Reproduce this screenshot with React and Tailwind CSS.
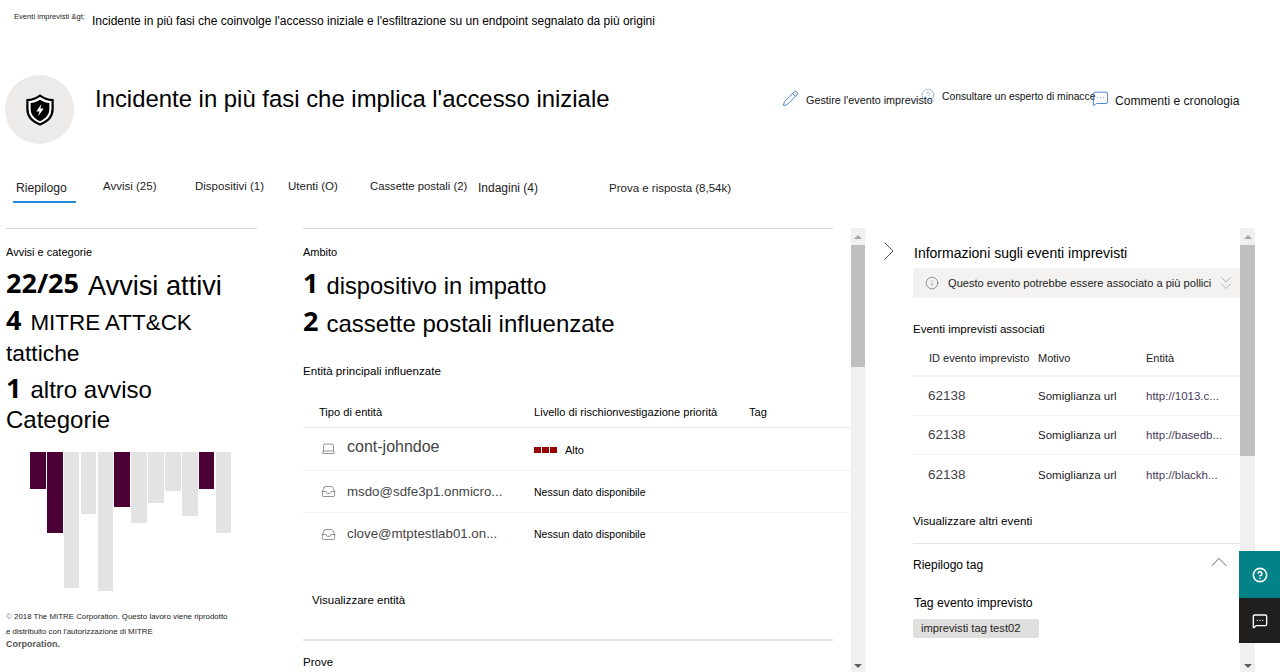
import React from 'react';
import { ChevronRight, ChevronUp, ChevronsDown, CircleHelp, Inbox, Info, Laptop, MessageSquareMore, Pencil } from 'lucide-react';

const BARS = [
    'h-[37px] bg-[#4b0036]', 'h-[81px] bg-[#4b0036]', 'h-[136px] bg-[#e3e3e3]', 'h-[62px] bg-[#e3e3e3]',
    'h-[139px] bg-[#e3e3e3]', 'h-[55px] bg-[#4b0036]', 'h-[71px] bg-[#e3e3e3]', 'h-[51px] bg-[#e3e3e3]',
    'h-[39px] bg-[#e3e3e3]', 'h-[64px] bg-[#e3e3e3]', 'h-[37px] bg-[#4b0036]', 'h-[81px] bg-[#e3e3e3]',
];

const TABS = [
    { label: 'Riepilogo', cls: 'ml-[16px] mt-[2px] w-[51px] text-[12.2px]' },
    { label: 'Avvisi (25)', cls: 'ml-[36px] w-[54px] text-[11.5px]' },
    { label: 'Dispositivi (1)', cls: 'ml-[38px] w-[70px] text-[11.5px]' },
    { label: 'Utenti (O)', cls: 'ml-[23px] w-[49px] text-[11.5px]' },
    { label: 'Cassette postali (2)', cls: 'ml-[33px] w-[98px] text-[11.3px]' },
    { label: 'Indagini (4)', cls: 'ml-[10px] mt-[2px] w-[62px] text-[12px]' },
    { label: 'Prova e risposta (8,54k)', cls: 'ml-[69px] mt-[2px] w-[124px] text-[11.5px]' },
];

const ENTITIES = [
    { name: 'cont-johndoe', icon: Laptop, text: 'text-[16px] -mt-[5px]', iconCls: '-mt-[2px]', risk: true, height: 'h-[43px]' },
    { name: 'msdo@sdfe3p1.onmicro...', icon: Inbox, text: 'text-[13.3px]', iconCls: '', height: 'h-[42px]' },
    { name: 'clove@mtptestlab01.on...', icon: Inbox, text: 'text-[13.3px]', iconCls: '', height: 'h-[42px]' },
];

const LINKED = ['http://1013.c...', 'http://basedb...', 'http://blackh...'];

function ShieldIcon() {
    return (
        <svg width="28" height="32" viewBox="0 0 30 34" fill="none">
            <path d="M15 1.5C11 4.5 6.5 6 1.5 6.5V16C1.5 24 7 29.5 15 32.5C23 29.5 28.5 24 28.5 16V6.5C23.5 6 19 4.5 15 1.5Z" fill="#ffffff" stroke="#000000" strokeWidth="2.4" />
            <path d="M15 6C12 8 8.5 9.2 5 9.6V16C5 22 9 26.5 15 29C21 26.5 25 22 25 16V9.6C21.5 9.2 18 8 15 6Z" fill="#000000" />
            <path d="M16.5 10.5L11 18.5H14.5L12.8 24L19 15.5H15.4L16.5 10.5Z" fill="#ffffff" />
        </svg>
    );
}

function Scrollbar({ thumb, width }) {
    return (
        <div className={`${width} h-full bg-[#f0f0f0] flex flex-col shrink-0`}>
            <div className="h-[17px] flex items-center justify-center">
                <div className="w-0 h-0 border-x-[4px] border-x-transparent border-b-[4px] border-b-[#a6a6a6]" />
            </div>
            <div className={`${thumb} bg-[#bfbfbf]`} />
            <div className="flex-1" />
            <div className="h-[13px] flex items-center justify-center">
                <div className="w-0 h-0 border-x-[4px] border-x-transparent border-t-[4px] border-t-[#606060]" />
            </div>
        </div>
    );
}

export default function App() {
    return (
        <div className="relative h-[672px] w-[1280px] overflow-hidden bg-white text-black font-['Liberation_Sans',Arial,sans-serif]">
            {/* Breadcrumb */}
            <div className="flex h-[75px] items-start pl-[14px] pt-[13px]">
                <span className="w-[78px] text-[7.6px] leading-[8px] text-[#222]">Eventi imprevisti &amp;gt;</span>
                <span className="text-[12px] leading-[16px]">Incidente in più fasi che coinvolge l'accesso iniziale e l'esfiltrazione su un endpoint segnalato da più origini</span>
            </div>

            {/* Header */}
            <div className="flex h-[100px] items-start">
                <div className="ml-[5px] flex h-[69px] w-[69px] items-center justify-center rounded-full bg-[#edebe9]">
                    <ShieldIcon />
                </div>
                <h1 className="ml-[21px] mt-[9px] w-[600px] text-[23.9px] leading-[30px]">Incidente in più fasi che implica l'accesso iniziale</h1>
                <div className="flex items-start text-[#111] pt-[13px] ml-[87px]">
                    <Pencil size={17} strokeWidth={1.2} className="text-[#2b6fd1] mt-[2px]" />
                    <span className="ml-[7px] mt-[4px] w-[115px] whitespace-nowrap text-[10.8px] leading-[16px]">Gestire l'evento imprevisto</span>
                    <CircleHelp size={14} strokeWidth={1.2} className="text-[#7aa5e0] shrink-0" />
                    <span className="ml-[7px] mt-[1px] w-[150px] whitespace-nowrap text-[10.3px] leading-[16px]">Consultare un esperto di minacce</span>
                    <MessageSquareMore size={17} strokeWidth={1.2} className="text-[#2b6fd1] shrink-0 mt-[2px]" />
                    <span className="ml-[6px] mt-[5px] whitespace-nowrap text-[12.1px] leading-[16px]">Commenti e cronologia</span>
                </div>
            </div>

            {/* Tabs */}
            <div className="flex h-[53px] items-start pt-[3px] text-[#222]">
                {TABS.map((tab) => (
                    <span key={tab.label} className={`${tab.cls} whitespace-nowrap leading-[16px]`}>{tab.label}</span>
                ))}
            </div>
            <div className="absolute left-[13px] top-[201px] h-[2px] w-[63px] bg-[#2b88d8]" />

            {/* Columns */}
            <div className="flex h-[444px]">
                {/* Left */}
                <div className="ml-[6px] w-[251px] shrink-0 pt-[16px]">
                    <div className="w-[251px] border-t border-[#d6d6d6] -mt-[16px] mb-[15px]" />
                    <p className="text-[11px] leading-[16px]">Avvisi e categorie</p>
                    <p className="mt-[9px] flex items-baseline text-[27.2px] leading-[32px]">
                        <b className="relative -top-[2px] text-[27px] font-['Open_Sans',sans-serif]">22/25</b>
                        <span className="ml-[9px]">Avvisi attivi</span>
                    </p>
                    <p className="mt-[2px] text-[22.4px] leading-[32px]">
                        <b className="text-[27px] font-['Open_Sans',sans-serif]">4</b>
                        <span className="ml-[9px]">MITRE ATT&amp;CK</span>
                    </p>
                    <p className="text-[22.8px] leading-[28px]">tattiche</p>
                    <p className="mt-[5px] text-[24px] leading-[32px]">
                        <b className="text-[27px] font-['Open_Sans',sans-serif]">1</b>
                        <span className="ml-[9px]">altro avviso</span>
                    </p>
                    <p className="text-[24px] leading-[28px]">Categorie</p>
                    <div className="mt-[18px] ml-[24px] flex items-start gap-[1.2px]">
                        {BARS.map((bar, i) => (
                            <div key={i} className={`${bar} w-[15.7px]`} />
                        ))}
                    </div>
                    <div className="mt-[18px] w-[240px] text-[7.9px] leading-[15px] text-[#222]">
                        <p className="whitespace-nowrap"><span className="text-[#888]">©</span>  2018 The MITRE Corporation. Questo lavoro viene riprodotto</p>
                        <p className="whitespace-nowrap">e distribuito con l'autorizzazione di MITRE</p>
                        <p className="text-[9px] text-[#555] font-semibold leading-[11px]">Corporation.</p>
                    </div>
                </div>

                {/* Middle */}
                <div className="ml-[46px] w-[548px] shrink-0 pt-[16px]">
                    <div className="w-[530px] border-t border-[#d6d6d6] -mt-[16px] mb-[15px]" />
                    <p className="text-[11px] leading-[16px]">Ambito</p>
                    <p className="mt-[8px] text-[23.7px] leading-[32px]">
                        <b className="relative -top-[1px] text-[27px] font-['Open_Sans',sans-serif]">1</b>
                        <span className="ml-[8px]">dispositivo in impatto</span>
                    </p>
                    <p className="mt-[4px] text-[24px] leading-[32px]">
                        <b className="relative -top-[1px] text-[27px] font-['Open_Sans',sans-serif]">2</b>
                        <span className="ml-[8px]">cassette postali influenzate</span>
                    </p>
                    <p className="mt-[23px] text-[11.6px] leading-[16px]">Entità principali influenzate</p>
                    <div className="mt-[25px] flex h-[24px] border-b border-[#edebe9] text-[11.1px] leading-[16px]">
                        <span className="ml-[16px] w-[215px]">Tipo di entità</span>
                        <span className="w-[215px] whitespace-nowrap">Livello di rischionvestigazione priorità</span>
                        <span>Tag</span>
                    </div>
                    {ENTITIES.map((entity, i) => {
                        const Icon = entity.icon;
                        return (
                            <div key={entity.name} className={`flex ${entity.height} items-center ${i === 2 ? '' : 'border-b border-[#f3f2f1]'} leading-[16px]`}>
                                <Icon size={15} strokeWidth={1} className={`ml-[18px] text-[#555] ${entity.iconCls}`} />
                                <span className={`ml-[11px] w-[187px] whitespace-nowrap ${entity.text} text-[#444]`}>{entity.name}</span>
                                {entity.risk ? (
                                    <span className="flex items-center gap-[1px] mt-[1px]">
                                        <span className="h-[6px] w-[7px] bg-[#990000]" />
                                        <span className="h-[6px] w-[7px] bg-[#990000]" />
                                        <span className="h-[6px] w-[7px] bg-[#990000]" />
                                        <span className="ml-[7px] text-[11px]">Alto</span>
                                    </span>
                                ) : (
                                    <span className="text-[10.5px]">Nessun dato disponibile</span>
                                )}
                            </div>
                        );
                    })}
                    <p className="ml-[9px] mt-[37px] text-[11.5px] leading-[16px]">Visualizzare entità</p>
                    <div className="mt-[31px] w-[530px] border-t-2 border-[#e3e3e3]" />
                    <p className="mt-[13px] text-[11.5px] leading-[16px]">Prove</p>
                </div>

                <Scrollbar thumb="h-[122px]" width="w-[14px]" />

                {/* Right */}
                <div className="ml-[8px] w-[32px] shrink-0 pt-[7px] text-[#555]">
                    <ChevronRight size={32} strokeWidth={0.75} />
                </div>
                <div className="ml-[8px] w-[327px] shrink-0 pt-[17px]">
                    <p className="text-[14px] leading-[16px] ml-[1px]">Informazioni sugli eventi imprevisti</p>
                    <div className="mt-[7px] flex h-[30px] items-center bg-[#f3f2f1] text-[#222]">
                        <Info size={14} strokeWidth={1} className="ml-[12px] shrink-0 text-[#555]" />
                        <span className="ml-[9px] w-[265px] shrink-0 whitespace-nowrap text-[11.1px]">Questo evento potrebbe essere associato a più pollici</span>
                        <ChevronsDown size={22} strokeWidth={0.8} className="ml-[2px] shrink-0 text-[#999]" />
                    </div>
                    <p className="mt-[23px] text-[11.5px] leading-[16px]">Eventi imprevisti associati</p>
                    <div className="mt-[13px] flex h-[27px] border-b-2 border-[#f3f2f1] text-[11px] leading-[16px] text-[#222]">
                        <span className="ml-[16px] w-[109px] whitespace-nowrap">ID evento imprevisto</span>
                        <span className="w-[108px]">Motivo</span>
                        <span>Entità</span>
                    </div>
                    {LINKED.map((url, i) => (
                        <div key={url} className={`flex h-[39px] items-center ${i === 2 ? '' : 'border-b border-[#f3f2f1]'} leading-[16px]`}>
                            <span className="ml-[15px] w-[110px] text-[13.5px] text-[#444]">62138</span>
                            <span className="w-[108px] text-[11.5px] text-[#222]">Somiglianza url</span>
                            <span className="text-[11.5px] text-[#4a3a5a] whitespace-nowrap">{url}</span>
                        </div>
                    ))}
                    <p className="mt-[19px] text-[11.7px] leading-[16px]">Visualizzare altri eventi</p>
                    <div className="mt-[14px] border-t border-[#e3e3e3]" />
                    <div className="mt-[13px] flex items-center justify-between pr-[7px]">
                        <span className="text-[12px] leading-[16px]">Riepilogo tag</span>
                        <ChevronUp size={28} strokeWidth={0.8} className="-mb-[8px] -mt-[15px] text-[#555]" />
                    </div>
                    <p className="mt-[22px] text-[12.2px] leading-[16px] ml-[1px]">Tag evento imprevisto</p>
                    <div className="mt-[8px] flex h-[19px] w-[126px] items-center rounded-[2px] bg-[#e1dfdd] pl-[8px] text-[11.2px] text-[#222]">imprevisti tag test02</div>
                </div>

                <Scrollbar thumb="h-[211px]" width="w-[15px]" />
            </div>

            {/* Floating buttons */}
            <div className="absolute right-0 top-[551px] flex w-[41px] flex-col text-white">
                <div className="flex h-[47px] items-center justify-center bg-[#038387]">
                    <CircleHelp size={16} strokeWidth={2.4} />
                </div>
                <div className="flex h-[45px] items-center justify-center bg-[#201f1e]">
                    <MessageSquareMore size={16} strokeWidth={2} />
                </div>
            </div>
        </div>
    );
}
